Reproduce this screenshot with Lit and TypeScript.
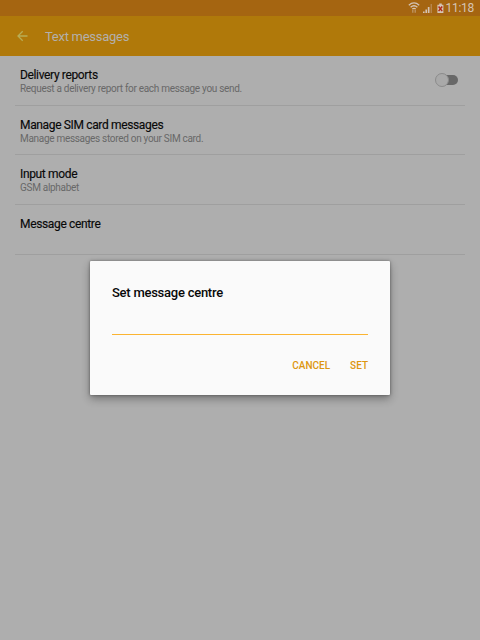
import { LitElement, html, css } from 'lit';
import { customElement, property } from 'lit/decorators.js';

@customElement('status-bar')
class StatusBar extends LitElement {
  static styles = css`
    :host {
      display: flex;
      justify-content: flex-end;
      align-items: center;
      height: 16px;
      padding-right: 6px;
      box-sizing: border-box;
      background: #a56511;
      color: #d5c4b4;
    }

    svg {
      display: block;
    }

    .clock {
      margin-left: 2px;
      font-size: 12px;
      line-height: 16px;
      letter-spacing: -0.3px;
    }
  `;

  render() {
    return html`
      <svg width="36" height="16" viewBox="0 0 36 16">
        <g fill="none" stroke="#d5c4b4" stroke-width="1.3">
          <path d="M0.8 5.2Q6 0.6 11.2 5.2" />
          <path d="M2.6 7.2Q6 4.2 9.4 7.2" />
          <path d="M4.3 9.1Q6 7.7 7.7 9.1" />
        </g>
        <path d="M4.8 9.8v3M7.2 9.8v3" stroke="#c09a6c" stroke-width="1.2" />
        <path d="M15 11.5h1.6V13H15zM17.4 9.5H19V13h-1.6zM19.8 7h1.7v6h-1.7z" fill="#d5c4b4" />
        <path d="M22.6 4h1.3v9h-1.3z" fill="#b98a55" />
        <path d="M31.2 3.5h2.6v1.2h1.6V13h-6V4.7h1.8z" fill="#d5c4b4" />
        <path d="M30.6 6.5l3.6 4.6M34.2 6.5l-3.6 4.6" stroke="#b02a18" stroke-width="1.5" />
      </svg>
      <span class="clock">11:18</span>
    `;
  }
}

@customElement('settings-item')
class SettingsItem extends LitElement {
  @property() label = '';
  @property() summary = '';
  @property({ type: Boolean }) toggle = false;

  static styles = css`
    :host {
      display: flex;
      align-items: center;
      justify-content: space-between;
      height: 49.7px;
      padding: 0 6px 0 5px;
      box-sizing: border-box;
      border-bottom: 1px solid #9f9f9f;
    }

    .text {
      align-self: flex-start;
      padding-top: 11px;
    }

    .label {
      font-size: 12px;
      line-height: 16px;
      letter-spacing: -0.35px;
      color: #090909;
      -webkit-text-stroke: 0.15px #090909;
    }

    .summary {
      font-size: 10px;
      line-height: 12px;
      letter-spacing: -0.3px;
      color: #686868;
    }

    .switch {
      display: flex;
      align-items: center;
      width: 18px;
      height: 10px;
      margin-right: 1px;
      border-radius: 5px;
      background: #686868;
    }

    .thumb {
      flex: none;
      width: 12px;
      height: 12px;
      margin-left: -5px;
      border: 1px solid #8b8b8b;
      border-radius: 50%;
      background: #a9a9a9;
    }
  `;

  render() {
    return html`
      <div class="text">
        <div class="label">${this.label}</div>
        <div class="summary">${this.summary}</div>
      </div>
      ${this.toggle ? html`<div class="switch"><div class="thumb"></div></div>` : ''}
    `;
  }
}

@customElement('message-dialog')
class MessageDialog extends LitElement {
  static styles = css`
    :host {
      display: flex;
      flex-direction: column;
      width: 300px;
      height: 134px;
      padding: 23px 22px 0;
      box-sizing: border-box;
      border-radius: 1px;
      background: #fafafa;
      box-shadow: 0 4px 9px rgba(0, 0, 0, 0.32), 0 0 3px rgba(0, 0, 0, 0.4);
    }

    .title {
      font-size: 13px;
      font-weight: 500;
      line-height: 18px;
      letter-spacing: -0.25px;
      color: #080808;
    }

    .field {
      height: 32px;
      border-bottom: 1px solid #fbb431;
    }

    .actions {
      display: flex;
      justify-content: flex-end;
      gap: 20px;
      padding-top: 24px;
      font-size: 10px;
      font-weight: 500;
      line-height: 14px;
      color: #dd960f;
    }
  `;

  render() {
    return html`
      <div class="title">Set message centre</div>
      <div class="field"></div>
      <div class="actions">
        <span>CANCEL</span>
        <span>SET</span>
      </div>
    `;
  }
}

@customElement('app-root')
class AppRoot extends LitElement {
  static styles = css`
    :host {
      display: block;
      position: relative;
      width: 480px;
      height: 640px;
      overflow: hidden;
      background: #aeaeae;
      font-family: Roboto, 'Liberation Sans', sans-serif;
    }

    .toolbar {
      display: flex;
      align-items: center;
      gap: 17px;
      height: 40px;
      padding-left: 17px;
      box-sizing: border-box;
      background: #b0790a;
      color: #b3b0ac;
      font-size: 13px;
      letter-spacing: -0.27px;
    }

    .toolbar svg {
      display: block;
    }

    .list {
      padding: 0 15px;
    }

    /* Centred over the dimmed settings page */
    .overlay {
      position: absolute;
      inset: 0;
      display: flex;
      justify-content: center;
      align-items: flex-start;
      padding-top: 261px;
    }
  `;

  render() {
    return html`
      <status-bar></status-bar>
      <div class="toolbar">
        <svg width="11" height="12" viewBox="0 0 11 12">
          <path d="M10.5 6H1.2M5.7 1.3L1 6l4.7 4.7" fill="none" stroke="#b8ad55" stroke-width="1.3" />
        </svg>
        <span>Text messages</span>
      </div>
      <div class="list">
        <settings-item
          label="Delivery reports"
          summary="Request a delivery report for each message you send."
          toggle
        ></settings-item>
        <settings-item
          label="Manage SIM card messages"
          summary="Manage messages stored on your SIM card."
        ></settings-item>
        <settings-item label="Input mode" summary="GSM alphabet"></settings-item>
        <settings-item label="Message centre"></settings-item>
      </div>
      <div class="overlay"><message-dialog></message-dialog></div>
    `;
  }
}
